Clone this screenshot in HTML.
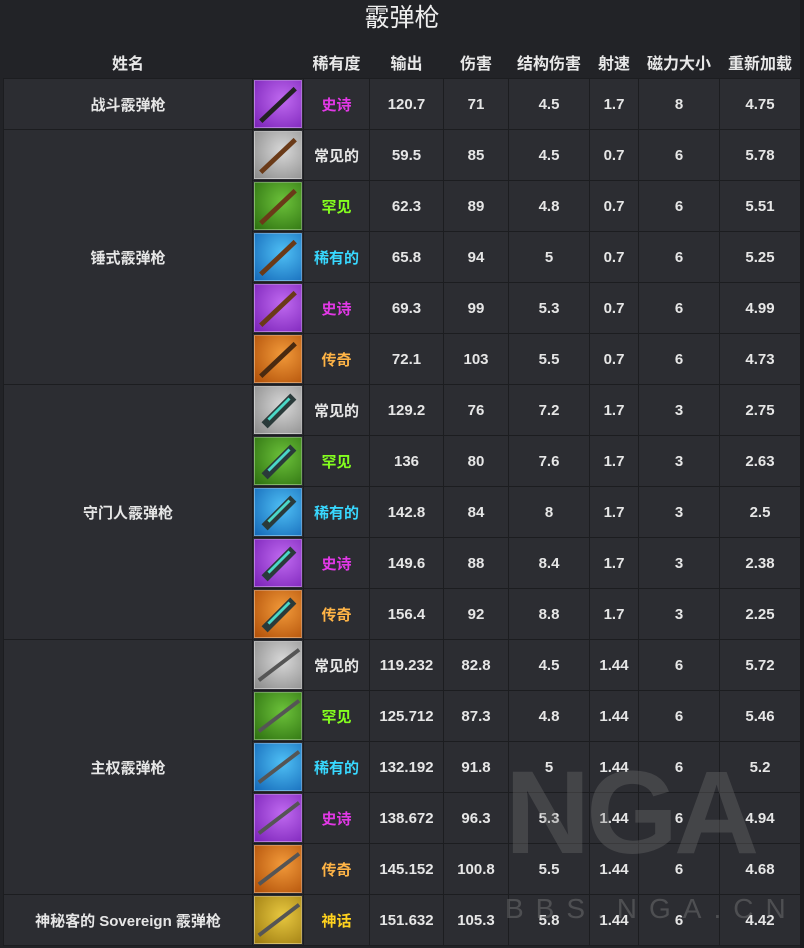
<!DOCTYPE html>
<html><head><meta charset="utf-8"><style>
body{margin:0;width:804px;height:948px;background:#222327;overflow:hidden;font-family:"Liberation Sans","Noto Sans CJK SC",sans-serif;color:#e6e6e6;position:relative}
.title{position:absolute;top:1px;left:0;width:804px;text-align:center;font-size:25px;line-height:34px;color:#eee}
.rb{position:absolute;top:0;right:0;width:4px;height:948px;background:#1a1b1e}
table{position:absolute;left:3px;top:45px;border-collapse:collapse;table-layout:fixed;width:797px}
th{height:33px;font-size:16px;font-weight:bold;color:#e8e8e8;background:#222327;padding:0;text-align:center}
td{height:50px;padding:0;text-align:center;font-size:15px;font-weight:bold;background:#2c2d32;border:1px solid #1c1d20}
td.ic{padding:0}
.g{width:48px;height:48px;margin:0 auto;box-sizing:border-box;border:1px solid rgba(255,255,255,.3);display:block}
.ep{background:radial-gradient(circle at 60% 40%,#c06af0,#7a22b8)}
.co{background:radial-gradient(circle at 60% 40%,#d8d8d8,#8a8a8a)}
.un{background:radial-gradient(circle at 60% 40%,#6cc23a,#2d7010)}
.ra{background:radial-gradient(circle at 60% 40%,#4fc0f5,#1468b8)}
.le{background:radial-gradient(circle at 60% 40%,#f29a3a,#b04f08)}
.my{background:radial-gradient(circle at 60% 40%,#e8c840,#9c7a10)}
.cEp{color:#e238e6}.cUn{color:#84ff1e}.cRa{color:#38d8ff}.cLe{color:#ffb446}.cMy{color:#ffd21e}.cCo{color:#e6e6e6}
.wm{position:absolute;left:505px;top:745px;font-size:118px;font-weight:bold;color:rgba(120,120,120,.32);letter-spacing:-4px;font-family:"Liberation Sans",sans-serif}
.wm2{position:absolute;left:505px;top:893px;font-size:28px;color:rgba(130,130,130,.4);letter-spacing:12px;font-family:"Liberation Sans",sans-serif}
</style></head><body>
<div class="title">霰弹枪</div>
<table>
<colgroup><col style="width:249px"><col style="width:51px"><col style="width:66px"><col style="width:74px"><col style="width:65px"><col style="width:81px"><col style="width:49px"><col style="width:81px"><col style="width:81px"></colgroup>
<tr><th>姓名</th><th></th><th>稀有度</th><th>输出</th><th>伤害</th><th>结构伤害</th><th>射速</th><th>磁力大小</th><th>重新加载</th></tr>
<tr><td>战斗霰弹枪</td><td class="ic"><svg class="g ep" viewBox="0 0 48 48"><path d="M6 42L42 8" stroke="#222" stroke-width="5"/></svg></td><td class="cEp">史诗</td><td>120.7</td><td>71</td><td>4.5</td><td>1.7</td><td>8</td><td>4.75</td></tr>
<tr><td rowspan="5">锤式霰弹枪</td><td class="ic"><svg class="g co" viewBox="0 0 48 48"><path d="M6 42L42 8" stroke="#6a3a18" stroke-width="5"/></svg></td><td class="cCo">常见的</td><td>59.5</td><td>85</td><td>4.5</td><td>0.7</td><td>6</td><td>5.78</td></tr>
<tr><td class="ic"><svg class="g un" viewBox="0 0 48 48"><path d="M6 42L42 8" stroke="#6a3a18" stroke-width="5"/></svg></td><td class="cUn">罕见</td><td>62.3</td><td>89</td><td>4.8</td><td>0.7</td><td>6</td><td>5.51</td></tr>
<tr><td class="ic"><svg class="g ra" viewBox="0 0 48 48"><path d="M6 42L42 8" stroke="#6a3a18" stroke-width="5"/></svg></td><td class="cRa">稀有的</td><td>65.8</td><td>94</td><td>5</td><td>0.7</td><td>6</td><td>5.25</td></tr>
<tr><td class="ic"><svg class="g ep" viewBox="0 0 48 48"><path d="M6 42L42 8" stroke="#6a3a18" stroke-width="5"/></svg></td><td class="cEp">史诗</td><td>69.3</td><td>99</td><td>5.3</td><td>0.7</td><td>6</td><td>4.99</td></tr>
<tr><td class="ic"><svg class="g le" viewBox="0 0 48 48"><path d="M6 42L42 8" stroke="#4a2a10" stroke-width="5"/></svg></td><td class="cLe">传奇</td><td>72.1</td><td>103</td><td>5.5</td><td>0.7</td><td>6</td><td>4.73</td></tr>
<tr><td rowspan="5">守门人霰弹枪</td><td class="ic"><svg class="g co" viewBox="0 0 48 48"><path d="M10 40L40 10" stroke="#2a3a3a" stroke-width="9"/><path d="M14 34L36 12" stroke="#4ad8c8" stroke-width="3"/></svg></td><td class="cCo">常见的</td><td>129.2</td><td>76</td><td>7.2</td><td>1.7</td><td>3</td><td>2.75</td></tr>
<tr><td class="ic"><svg class="g un" viewBox="0 0 48 48"><path d="M10 40L40 10" stroke="#2a3a3a" stroke-width="9"/><path d="M14 34L36 12" stroke="#4ad8c8" stroke-width="3"/></svg></td><td class="cUn">罕见</td><td>136</td><td>80</td><td>7.6</td><td>1.7</td><td>3</td><td>2.63</td></tr>
<tr><td class="ic"><svg class="g ra" viewBox="0 0 48 48"><path d="M10 40L40 10" stroke="#2a3a3a" stroke-width="9"/><path d="M14 34L36 12" stroke="#4ad8c8" stroke-width="3"/></svg></td><td class="cRa">稀有的</td><td>142.8</td><td>84</td><td>8</td><td>1.7</td><td>3</td><td>2.5</td></tr>
<tr><td class="ic"><svg class="g ep" viewBox="0 0 48 48"><path d="M10 40L40 10" stroke="#2a3a3a" stroke-width="9"/><path d="M14 34L36 12" stroke="#4ad8c8" stroke-width="3"/></svg></td><td class="cEp">史诗</td><td>149.6</td><td>88</td><td>8.4</td><td>1.7</td><td>3</td><td>2.38</td></tr>
<tr><td class="ic"><svg class="g le" viewBox="0 0 48 48"><path d="M10 40L40 10" stroke="#2a3a3a" stroke-width="9"/><path d="M14 34L36 12" stroke="#4ad8c8" stroke-width="3"/></svg></td><td class="cLe">传奇</td><td>156.4</td><td>92</td><td>8.8</td><td>1.7</td><td>3</td><td>2.25</td></tr>
<tr><td rowspan="5">主权霰弹枪</td><td class="ic"><svg class="g co" viewBox="0 0 48 48"><path d="M4 40L46 8" stroke="#555" stroke-width="4"/></svg></td><td class="cCo">常见的</td><td>119.232</td><td>82.8</td><td>4.5</td><td>1.44</td><td>6</td><td>5.72</td></tr>
<tr><td class="ic"><svg class="g un" viewBox="0 0 48 48"><path d="M4 40L46 8" stroke="#555" stroke-width="4"/></svg></td><td class="cUn">罕见</td><td>125.712</td><td>87.3</td><td>4.8</td><td>1.44</td><td>6</td><td>5.46</td></tr>
<tr><td class="ic"><svg class="g ra" viewBox="0 0 48 48"><path d="M4 40L46 8" stroke="#555" stroke-width="4"/></svg></td><td class="cRa">稀有的</td><td>132.192</td><td>91.8</td><td>5</td><td>1.44</td><td>6</td><td>5.2</td></tr>
<tr><td class="ic"><svg class="g ep" viewBox="0 0 48 48"><path d="M4 40L46 8" stroke="#555" stroke-width="4"/></svg></td><td class="cEp">史诗</td><td>138.672</td><td>96.3</td><td>5.3</td><td>1.44</td><td>6</td><td>4.94</td></tr>
<tr><td class="ic"><svg class="g le" viewBox="0 0 48 48"><path d="M4 40L46 8" stroke="#555" stroke-width="4"/></svg></td><td class="cLe">传奇</td><td>145.152</td><td>100.8</td><td>5.5</td><td>1.44</td><td>6</td><td>4.68</td></tr>
<tr><td>神秘客的 Sovereign 霰弹枪</td><td class="ic"><svg class="g my" viewBox="0 0 48 48"><path d="M4 40L46 8" stroke="#555" stroke-width="4"/></svg></td><td class="cMy">神话</td><td>151.632</td><td>105.3</td><td>5.8</td><td>1.44</td><td>6</td><td>4.42</td></tr>
</table>
<div class="wm">NGA</div>
<div class="wm2">BBS.NGA.CN</div>
<div class="rb"></div>
</body></html>
